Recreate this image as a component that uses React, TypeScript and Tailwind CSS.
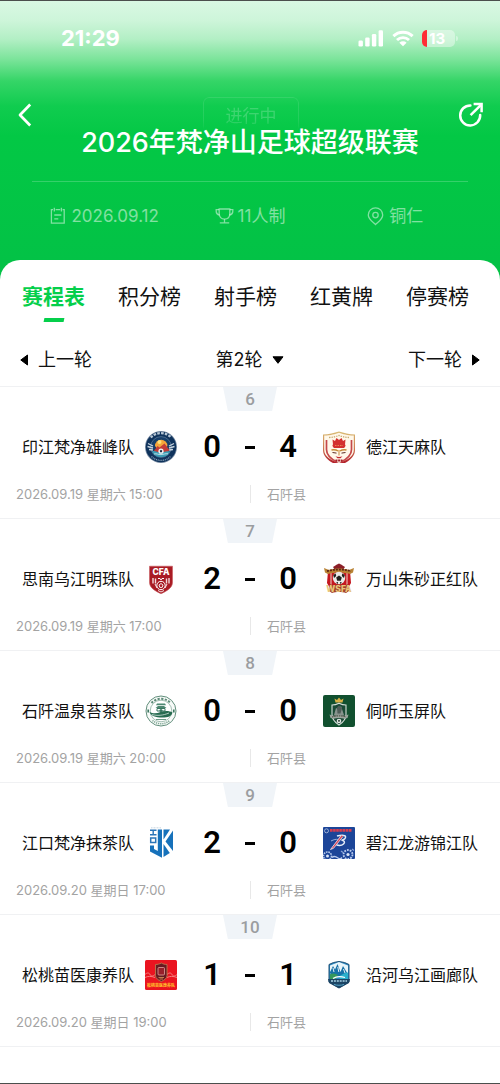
import { useState, type ReactNode } from "react";
import { clsx } from "clsx";

type Match = {
  no: number;
  home: string;
  homeLogo: ReactNode;
  away: string;
  awayLogo: ReactNode;
  score: [number, number];
  time: string;
  venue: string;
};

const tabs = ["赛程表", "积分榜", "射手榜", "红黄牌", "停赛榜"];
const rounds = [1, 2, 3, 4, 5, 6, 7, 8, 9];

/* ---------- status bar ---------- */

function SignalIcon() {
  return (
    <svg width="26" height="17" viewBox="0 0 26 17" fill="#fff" aria-hidden="true">
      <rect x="0.5" y="10.5" width="4.4" height="6" rx="1.3" />
      <rect x="7.2" y="7.5" width="4.4" height="9" rx="1.3" />
      <rect x="13.9" y="4" width="4.4" height="12.5" rx="1.3" />
      <rect x="20.6" y="0.3" width="4.4" height="16.2" rx="1.3" />
    </svg>
  );
}

function WifiIcon() {
  return (
    <svg width="22" height="17" viewBox="0 0 22 17" fill="none" stroke="#fff" aria-hidden="true">
      <path d="M1.4 6.2a13.8 13.8 0 0 1 19.2 0" strokeWidth="3" />
      <path d="M5 10a8.7 8.7 0 0 1 12 0" strokeWidth="2.9" />
      <path d="M11 16.3 7.4 12.7a5.2 5.2 0 0 1 7.2 0Z" fill="#fff" stroke="none" />
    </svg>
  );
}

function Battery() {
  return (
    <div className="flex items-center gap-px">
      <div className="flex h-[17px] w-[33px] overflow-hidden rounded-[5px] bg-white/40">
        <span className="w-[5px] bg-[#ff2d35]" />
        <span className="flex-1 pl-[2px] text-[15px] leading-[17px] font-bold text-white">13</span>
      </div>
      <span className="h-[5px] w-[2px] rounded-r bg-white/40" />
    </div>
  );
}

/* ---------- header icons ---------- */

function BackIcon() {
  return (
    <svg width="14" height="24" viewBox="0 0 14 24" fill="none" stroke="#fff" strokeWidth="2.7" aria-hidden="true">
      <path d="M12.2 1.5 2 12l10.2 10.5" strokeLinejoin="round" />
    </svg>
  );
}

function ShareIcon() {
  return (
    <svg width="26" height="26" viewBox="0 0 26 26" fill="none" stroke="#fff" strokeWidth="2.5" aria-hidden="true">
      <path d="M12.4 3.4A10 10 0 1 0 22.2 13" strokeLinecap="round" />
      <path d="M12.6 13.2 23 2.8" />
      <path d="M15.6 2.1h8v8.2" />
    </svg>
  );
}

function CalendarIcon() {
  return (
    <svg width="16" height="18" viewBox="0 0 16 18" fill="none" stroke="currentColor" strokeWidth="1.3" aria-hidden="true">
      <path d="M3 2.6H1.4v13.6h12.8V2.6h-1.6M5.6 2.6h4.6" />
      <path d="M4.3 0.8v3.6M11.4 0.8v3.6M4.3 8h7M4.3 11.8h4" />
    </svg>
  );
}

function TrophyIcon() {
  return (
    <svg width="19" height="18" viewBox="0 0 19 18" fill="none" stroke="currentColor" strokeWidth="1.3" aria-hidden="true">
      <path d="M4.2 2h10.6v4.6c0 3.2-2 5.6-5.3 5.6S4.2 9.8 4.2 6.6Z" />
      <path d="M4.2 2.6h-3v1.6c0 2 1.3 3.4 3.3 3.9M14.8 2.6h3v1.6c0 2-1.3 3.4-3.3 3.9" />
      <path d="M9.5 12.2v3.5M4.8 15.9h9.4" />
    </svg>
  );
}

function PinIcon() {
  return (
    <svg width="17" height="19" viewBox="0 0 17 19" fill="none" stroke="currentColor" strokeWidth="1.3" aria-hidden="true">
      <path d="M8.5 17.6C6.5 15.4 1.3 12.5 1.3 8a7.2 7.2 0 0 1 14.4 0c0 4.5-5.2 7.4-7.2 9.6Z" />
      <circle cx="8.5" cy="8.1" r="2.7" />
    </svg>
  );
}

/* ---------- club crests ---------- */

function Crest({ children }: { children: ReactNode }) {
  return (
    <svg className="size-8 shrink-0" viewBox="0 0 32 32" aria-hidden="true">
      {children}
    </svg>
  );
}

const yinjiang = (
  <Crest>
    <circle cx="16" cy="16" r="16" fill="#8092a8" />
    <circle cx="16" cy="16" r="15.2" fill="#0f335c" />
    <circle cx="16" cy="16" r="10.4" fill="#173f6b" stroke="#6f8ba6" strokeWidth=".6" />
    <path d="M5.8 6.5A14 14 0 0 1 26.2 6.5" stroke="#b9c8d6" strokeWidth="2.2" strokeDasharray="2.6 1.2" fill="none" />
    <path d="M6.5 25.5a13.5 13.5 0 0 0 19 0" stroke="#8ea5bb" strokeWidth="1.3" strokeDasharray="1 .8" fill="none" />
    <path d="M3 12.5l5 2.5M2.5 15.5l5.5 1.5M4 18.5l4 .5M29 12.5l-5 2.5M29.5 15.5 24 17M28 18.5l-4 .5" stroke="#c9d5df" strokeWidth="1.3" />
    <path d="M10 15a6.2 6.2 0 0 1 12.4 0l-2 3h-8Z" fill="#f6a63a" />
    <circle cx="14.5" cy="11" r="2" fill="#ffe07a" />
    <path d="M8.500 20.500l4-5.500 2 1.500 5-4 5 6.500-3 3Z" fill="#c33c38" />
    <path d="M7 20.500c3-1.500 5 1 8 1s6-2 10-1c-1 3.500-5 5.500-9 5.500s-7.500-2-9-5.500Z" fill="#3d9db5" />
    <path d="M9 23c3-.8 4 .8 7 .6s4-1.200 7-.8" stroke="#d7eef2" strokeWidth=".8" fill="none" />
    <circle cx="16" cy="20.2" r="2.6" fill="#f2f5f6" />
    <path d="M16 18.800l1.300 1-.5 1.500h-1.600l-.5-1.500Z" fill="#1b2c44" />
  </Crest>
);

const dejiang = (
  <Crest>
    <defs>
      <linearGradient id="dj" x1="0" y1="0" x2="0" y2="1">
        <stop offset="0" stopColor="#d9bd74" />
        <stop offset=".5" stopColor="#cf7d55" />
        <stop offset="1" stopColor="#b3202b" />
      </linearGradient>
    </defs>
    <path d="M0 3.500C6 3.500 11 2 16 .5c5 1.500 10 3 16 3V19c0 6-5 10.500-10 13H10C5 29.500 0 25 0 19Z" fill="url(#dj)" />
    <path d="M1.200 4.500C8 4.500 12 3 16 1.800c4 1.200 8 2.700 14.800 2.700V19c0 6-6 10-14.800 13C7.200 29 1.200 25 1.200 19Z" fill="#fff8ea" />
    <path d="M3.500 9v9.500C3.500 24 8 28 14 31M28.500 9v9.500C28.500 24 24 28 18 31" stroke="#c5484a" strokeWidth="1.7" fill="none" />
    <path d="M6 6.500c4 0 7-1 10-2 3 1 6 2 10 2" stroke="#c9ab74" strokeWidth="1.3" strokeDasharray="1.4 1" fill="none" />
    <path d="M9.500 8.500l2.500 1.500 1.500-3 2.500 2 2.500-2L20 10l2.500-1.500-.5 5c1 .5.500 2.500-1 3.500h-10c-1.500-1-2-3-1-3.500Z" fill="#d3312f" />
    <path d="M12 14.500h8" stroke="#f0a85c" strokeWidth=".7" strokeDasharray="1.5 1" />
    <path d="M8.500 19c2.500-.5 5 0 6.500 1M23.500 19c-2.500-.5-5 0-6.500 1" stroke="#c58a35" strokeWidth="1.5" fill="none" />
    <path d="M9.500 21.500l4 .6M22.500 21.500l-4 .6" stroke="#5b2b22" strokeWidth="1" />
    <path d="M16 19v5.500" stroke="#d29a52" strokeWidth="1.2" />
    <path d="M12.500 25.200c2 1 5 1 7 0l-2 2h-3Z" fill="#c2272c" />
    <path d="M12.500 29.500h7" stroke="#a51f28" strokeWidth="2" strokeDasharray="2 .6" />
  </Crest>
);

const sinan = (
  <Crest>
    <path d="M4.500 3.200h23v16c0 5.500-5 8.300-11.500 11.600C9.500 27.500 4.500 24.700 4.500 19.200Z" fill="#a91b24" stroke="#c85a5f" strokeWidth=".6" />
    <text x="16" y="11.5" textAnchor="middle" fontSize="8.5" fontWeight="800" fill="#fff" fontFamily="Inter, sans-serif">CFA</text>
    <path d="M8 15v5.500M10.500 15.500v5M24 15v5.500M21.500 15.500v5" stroke="#f3d9da" strokeWidth="1.4" />
    <path d="M13 15.500h2l1 1.500 1-1.500h2" stroke="#fff" strokeWidth="1" fill="none" />
    <circle cx="16" cy="22.5" r="4.2" fill="none" stroke="#fff" strokeWidth="1" />
    <path d="M16 20.500l2 1.500-.8 2.400h-2.400L14 22ZM10 21l2 4M22 21l-2 4M13 27.500l3 1.500 3-1.500" fill="none" stroke="#fff" strokeWidth=".9" />
  </Crest>
);

const wanshan = (
  <Crest>
    <path d="M5 8h22l1 12-4 7H8l-4-7Z" fill="#c4171f" />
    <path d="M8 9v14M24 9v14" stroke="#f0d2c8" strokeWidth="1" />
    <path d="M10 4l4-2.500 2-1 2 1L22 4l-2 3h-8Z" fill="#8c1f28" />
    <path d="M1 5l5 2c6-2 14-2 20 0l5-2-1 4.500-3 1.500c-7-2-15-2-22 0l-3-1.500Z" fill="#b98335" />
    <path d="M4 8.200c8-2.200 16-2.200 24 0" stroke="#5c2415" strokeWidth="1.8" strokeDasharray="2 1" fill="none" />
    <circle cx="16" cy="15" r="6.2" fill="#e9e9e7" />
    <path d="M16 12.500l2.800 2-1 3.200h-3.600l-1-3.200ZM10.200 12l2.500-1.500.5 2.500-2.200 2ZM21.800 12l-2.500-1.500-.5 2.500 2.200 2ZM13 19.500l2-.5v2ZM19 19.500l-2-.5v2Z" fill="#22211f" />
    <path d="M7 21l4 1.500c3-1.500 7-1.500 10 0l4-1.500 1 7-3 2c-4-1.200-10-1.200-14 0l-3-2Z" fill="#a3402a" />
    <text x="16" y="29" textAnchor="middle" fontSize="8.5" fontWeight="800" fill="#e8c67c" fontFamily="Inter, sans-serif">WSFA</text>
  </Crest>
);

const shiqian = (
  <Crest>
    <circle cx="16" cy="16" r="15" fill="#f7faf8" stroke="#628f7c" strokeWidth="1" />
    <circle cx="16" cy="16" r="10.8" fill="#fff" stroke="#8db0a1" strokeWidth=".8" />
    <path d="M6.500 8a12.800 12.800 0 0 1 19 0" stroke="#5d8b78" strokeWidth="2" strokeDasharray="2.2 1.4" fill="none" />
    <path d="M7.500 25.500a12.800 12.800 0 0 0 17 0" stroke="#7ba592" strokeWidth="1.5" strokeDasharray="1.2 .9" fill="none" />
    <path d="M3.200 14.500v3M28.800 14.500v3" stroke="#3c7760" strokeWidth="1.6" />
    <path d="M12 8.500h8l1 1.800H11ZM13 11h6l2.500 2h-11Z" fill="#4d8771" />
    <path d="M12 13.500h8v2.500h-8Z" fill="none" stroke="#397760" strokeWidth="1" />
    <circle cx="16" cy="15.5" r="1.5" fill="#397760" />
    <path d="M4.500 17c3 1.500 7 1.800 11 0 4-1.500 9-1.500 12 .5-1 4-4 5-10.500 5S6 21 4.500 17Z" fill="#266b50" />
    <path d="M7 19.500c5 1.500 11 1 17-1.500" stroke="#cfe2da" strokeWidth=".8" fill="none" />
    <path d="M11 24.500h10" stroke="#6b9b87" strokeWidth="1" />
  </Crest>
);

const yuping = (
  <Crest>
    <rect width="32" height="32" rx="2" fill="#11502f" />
    <path d="M11.500 3.500l2.500 1.500 2-2.500 2 2.500 2.500-1.500-1 4h-7Z" fill="#d8b045" />
    <path d="M9 10c3 0 5-.8 7-1.800 2 1 4 1.800 7 1.800v9.500c0 5-3 8-7 10.500-4-2.500-7-5.500-7-10.500Z" fill="#1a4a35" stroke="#d5ddd8" strokeWidth="1.1" />
    <path d="M11 20l2-7 2.500 1.500L18 11l3 9Z" fill="#87938d" />
    <path d="M14 12.500l2-2 3 3-1.500 5h-3Z" fill="#4f5d58" />
    <path d="M6.500 19.500l4 1.200c3.500-1 7.500-1 11 0l4-1.200-1 3.500-3 .8c-3.500-1-7.500-1-11 0l-3-.8Z" fill="#9aa59d" />
    <path d="M9 22c4.500-1.500 9.500-1.500 14 0" stroke="#49433a" strokeWidth="1" strokeDasharray="1.5 .8" fill="none" />
    <circle cx="16" cy="26" r="2.3" fill="#e4e9e5" />
    <path d="M16 24.800l1 .8-.4 1.200h-1.200l-.4-1.200Z" fill="#20352b" />
  </Crest>
);

const jiangkou = (
  <Crest>
    <path d="M6 .8h10" stroke="#b9cbd9" strokeWidth=".8" strokeDasharray="1 .5" />
    <path d="M5 3.300h6.500M8.200 3.300v4.500M5 7.800h6.500" stroke="#2a75b8" strokeWidth="1.4" />
    <path d="M5.700 11h5v4.500h-5Z" fill="none" stroke="#2a75b8" strokeWidth="1.5" />
    <path d="M12.800 2.500h4.200v28.300L5 24.500v-6h4v3.600l3.800 2Z" fill="#1671ba" />
    <path d="M18.500 2.500h6.500l-6.500 10Z" fill="#1671ba" />
    <path d="M28 3.500v20.500L20.500 14.500Z" fill="#1671ba" />
    <path d="M18.500 17l6.300 9-6.300 4Z" fill="#1671ba" />
  </Crest>
);

const bijiang = (
  <Crest>
    <rect width="32" height="32" rx="1" fill="#1c4598" />
    <circle cx="3.5" cy="3.8" r="2" fill="none" stroke="#b8c4df" strokeWidth=".8" />
    <path d="M7 3.300h22" stroke="#d93d4e" strokeWidth="2.7" strokeDasharray="2.6 .5" />
    <path d="M14 9c3-1 8-1.500 8.500.5.5 2-1.500 3.200-4 3.800 3 .2 3.800 2 2 3.700-1.500 1.400-4.500 1.600-7 1" fill="none" stroke="#e4ebf7" strokeWidth="1.5" />
    <path d="M18.500 8 7.500 22.500l3-1.200L20 9.500" fill="#d84255" stroke="#fff" strokeWidth=".7" />
    <path d="M8 14c3-1.500 5-2 7-1.500" stroke="#9bb4dc" strokeWidth="1" fill="none" />
    <circle cx="4.5" cy="29" r="4" fill="none" stroke="#b9cbed" strokeWidth="1.6" strokeDasharray="1.6 .8" />
    <circle cx="4.5" cy="29" r="1.5" fill="#dbe5f7" />
    <path d="M9 30.500c2-2 4-1 6 .5s3 .8 4-.5" stroke="#b9cbed" strokeWidth="1.3" fill="none" />
    <circle cx="25" cy="27.5" r="4.5" fill="none" stroke="#b9cbed" strokeWidth="1.8" strokeDasharray="1.8 1" />
    <circle cx="25" cy="27.5" r="1.6" fill="#dbe5f7" />
    <path d="M18 24l2 1.500M29 22l2 1.500" stroke="#8aa5d8" strokeWidth="1.2" />
  </Crest>
);

const songtao = (
  <Crest>
    <rect y="1" width="32" height="30" rx="1.5" fill="#ea1420" />
    <path d="M0 15.500c2-2 4-2 5 0s3 2 5 0M22 15.500c2-2 4-2 5 0s3 2 5 0M0 18.500c3-1.500 6-1.500 10 0M22 18.500c3-1.500 6-1.500 10 0" stroke="#f58a87" strokeWidth=".9" fill="none" />
    <path d="M10.500 5.500c2 0 4-.5 5.800-1.500 1.800 1 3.700 1.500 5.700 1.500v11c0 3-2.700 4.500-5.700 6-3-1.500-5.800-3-5.800-6Z" fill="#681a22" stroke="#b57a4d" strokeWidth=".9" />
    <rect x="13" y="8.5" width="6.5" height="7.5" rx="1" fill="#97202b" stroke="#e0a2a0" strokeWidth=".8" />
    <path d="M13.500 18.500h5.500M14.500 20h3.500" stroke="#d59a58" strokeWidth=".8" />
    <text x="16" y="28" textAnchor="middle" fontSize="4" fontWeight="900" fill="#ffb52b" fontFamily="'Noto Sans CJK SC', sans-serif">松桃苗医康养队</text>
  </Crest>
);

const yanhe = (
  <Crest>
    <path d="M6 5.500l4.500-2 5.500-1 5.500 1 4.500 2v17.500L16 28.800 6 23Z" fill="#2b87bf" stroke="#1d4f75" strokeWidth="1" />
    <path d="M7 6.500l9-3.500 9 3.500v8.500H7Z" fill="#e8f5fa" />
    <path d="M6.500 14l3.500-7 2 3.500L14.500 5l3 8 2.500-6 4.500 7.500-5 2.500h-9Z" fill="#1772a8" />
    <path d="M10 9l1 4M14.800 8l1 5M20.500 10l1.500 4" stroke="#fff" strokeWidth=".9" />
    <path d="M6.800 15.500c3-2 6-1 8 .5l-2 4H7Z" fill="#35985d" />
    <path d="M25 13.500c-3 0-6 2-9 4l1 3h8Z" fill="#29b0cc" />
    <path d="M10 19.500c3-2 7-2.500 12-1" stroke="#fff" strokeWidth="1.3" fill="none" />
    <path d="M5 20h22l-1 4-10 5.500L6 24Z" fill="#1b4464" />
    <path d="M8 22h16" stroke="#a9d4e6" strokeWidth="1.7" strokeDasharray="2 .9" />
    <path d="M11 25.500c3 1 7 1 10 0" stroke="#55a4c9" strokeWidth="1" fill="none" />
  </Crest>
);

const matches: Match[] = [
  { no: 6, home: "印江梵净雄峰队", homeLogo: yinjiang, away: "德江天麻队", awayLogo: dejiang, score: [0, 4], time: "2026.09.19 星期六 15:00", venue: "石阡县" },
  { no: 7, home: "思南乌江明珠队", homeLogo: sinan, away: "万山朱砂正红队", awayLogo: wanshan, score: [2, 0], time: "2026.09.19 星期六 17:00", venue: "石阡县" },
  { no: 8, home: "石阡温泉苔茶队", homeLogo: shiqian, away: "侗听玉屏队", awayLogo: yuping, score: [0, 0], time: "2026.09.19 星期六 20:00", venue: "石阡县" },
  { no: 9, home: "江口梵净抹茶队", homeLogo: jiangkou, away: "碧江龙游锦江队", awayLogo: bijiang, score: [2, 0], time: "2026.09.20 星期日 17:00", venue: "石阡县" },
  { no: 10, home: "松桃苗医康养队", homeLogo: songtao, away: "沿河乌江画廊队", awayLogo: yanhe, score: [1, 1], time: "2026.09.20 星期日 19:00", venue: "石阡县" },
];

function MatchRow({ match }: { match: Match }) {
  return (
    <li className="border-t border-[#f0f1f3] pb-[15px]">
      <div className="mx-auto h-6 w-[54px] bg-[#f0f4f8] text-center font-['Roboto'] text-[17px] leading-6 font-medium text-[#9b9da0] [clip-path:polygon(0_0,100%_0,91%_100%,9%_100%)]">
        {match.no}
      </div>
      <div className="mt-5 flex h-8 items-center">
        <div className="flex min-w-0 flex-1 items-center justify-end gap-[11px] text-base whitespace-nowrap">
          <span>{match.home}</span>
          {match.homeLogo}
        </div>
        <div className="grid w-[146px] shrink-0 grid-cols-[1fr_6px_1fr] items-center text-center font-['Roboto'] text-[31px] leading-8 font-semibold text-black">
          <span>{match.score[0]}</span>
          <span className="flex justify-center">
            <span className="h-[3px] w-[10px] shrink-0 bg-black" />
          </span>
          <span>{match.score[1]}</span>
        </div>
        <div className="flex min-w-0 flex-1 items-center gap-[11px] text-base whitespace-nowrap">
          {match.awayLogo}
          <span>{match.away}</span>
        </div>
      </div>
      <div className="mt-[22px] grid h-[18px] grid-cols-2 text-[13px] leading-[18px] text-[#a3a3a3]">
        <time className="pl-4">{match.time}</time>
        <span className="border-l border-[#e8e8e8] pl-4">{match.venue}</span>
      </div>
    </li>
  );
}

export default function App() {
  const [tab, setTab] = useState(tabs[0]);
  const [round, setRound] = useState(2);

  return (
    <div className="flex min-h-screen flex-col border-y border-[#4b4f4d] bg-[#03c246] font-['Inter','Noto_Sans_CJK_SC',sans-serif] text-[#111]">
      <header className="bg-[linear-gradient(180deg,#d9f8e3_0px,#cdf5d9_20px,#b3efc5_38px,#7ce49b_58px,#35d567_80px,#10cc4f_105px,#03c845_135px,#03c246_260px)] pb-8">
        <div className="flex h-[74px] items-center justify-between pr-[42px] pl-[61px] text-white">
          <time className="text-[22px] leading-7 font-bold">21:29</time>
          <div className="flex items-center gap-2">
            <SignalIcon />
            <WifiIcon />
            <Battery />
          </div>
        </div>

        <div className="mt-[22px] flex h-9 items-center justify-between pr-4 pl-[18px]">
          <button type="button" aria-label="返回" className="flex w-[26px] justify-start">
            <BackIcon />
          </button>
          <span className="h-9 w-24 rounded-md border border-white/10 text-center text-[17px] leading-9 text-white/20 [mask-image:linear-gradient(#000_60%,transparent)]">
            进行中
          </span>
          <button type="button" aria-label="分享" className="flex w-[26px] justify-end">
            <ShareIcon />
          </button>
        </div>
        <h1 className="relative -mt-2 text-center text-[27px] leading-9 font-medium whitespace-nowrap text-white">
          2026年梵净山足球超级联赛
        </h1>

        <div className="mx-8 mt-5 grid grid-cols-3 border-t border-white/20 pt-[22px] text-[17px] leading-6 text-white/50">
          <span className="flex items-center justify-center gap-[5px]">
            <CalendarIcon />
            <time>2026.09.12</time>
          </span>
          <span className="flex items-center justify-center gap-1">
            <TrophyIcon />
            11人制
          </span>
          <span className="flex items-center justify-center gap-[5px]">
            <PinIcon />
            铜仁
          </span>
        </div>
      </header>

      <main className="flex-1 rounded-t-[20px] bg-white">
        <nav className="flex justify-between pt-[21px] pr-[31px] pl-[22px]">
          {tabs.map((name) => (
            <button
              key={name}
              type="button"
              onClick={() => setTab(name)}
              className={clsx(
                "flex flex-col items-center gap-[5px] text-[21px] leading-8 whitespace-nowrap",
                tab === name ? "font-bold text-[#05cf4b]" : "text-[#111]",
              )}
            >
              {name}
              <span className={clsx("h-1 w-5 -skew-x-12", tab === name && "bg-[#05cf4b]")} />
            </button>
          ))}
        </nav>

        <div className="grid grid-cols-3 items-center px-5 pt-6 pb-3 text-lg leading-7">
          <button type="button" className="flex items-center gap-[10px]">
            <svg width="8" height="12" viewBox="0 0 8 12" aria-hidden="true">
              <path d="M7.5 1v10L.8 6Z" fill="#000" stroke="#000" strokeLinejoin="round" />
            </svg>
            上一轮
          </button>
          <label className="flex items-center justify-center">
            <select
              aria-label="轮次"
              value={round}
              onChange={(e) => setRound(Number(e.target.value))}
              className="appearance-none bg-transparent pr-[21px]"
            >
              {rounds.map((n) => (
                <option key={n} value={n}>{`第${n}轮`}</option>
              ))}
            </select>
            <svg className="pointer-events-none -ml-3" width="12" height="8" viewBox="0 0 12 8" aria-hidden="true">
              <path d="M1 .8h10L6 7.300Z" fill="#000" stroke="#000" strokeLinejoin="round" />
            </svg>
          </label>
          <button type="button" className="flex items-center justify-end gap-[10px]">
            下一轮
            <svg width="8" height="12" viewBox="0 0 8 12" aria-hidden="true">
              <path d="M.5 1v10L7.200 6Z" fill="#000" stroke="#000" strokeLinejoin="round" />
            </svg>
          </button>
        </div>

        <ul className="border-b border-[#f0f1f3]">
          {matches.map((m) => (
            <MatchRow key={m.no} match={m} />
          ))}
        </ul>
      </main>
    </div>
  );
}
